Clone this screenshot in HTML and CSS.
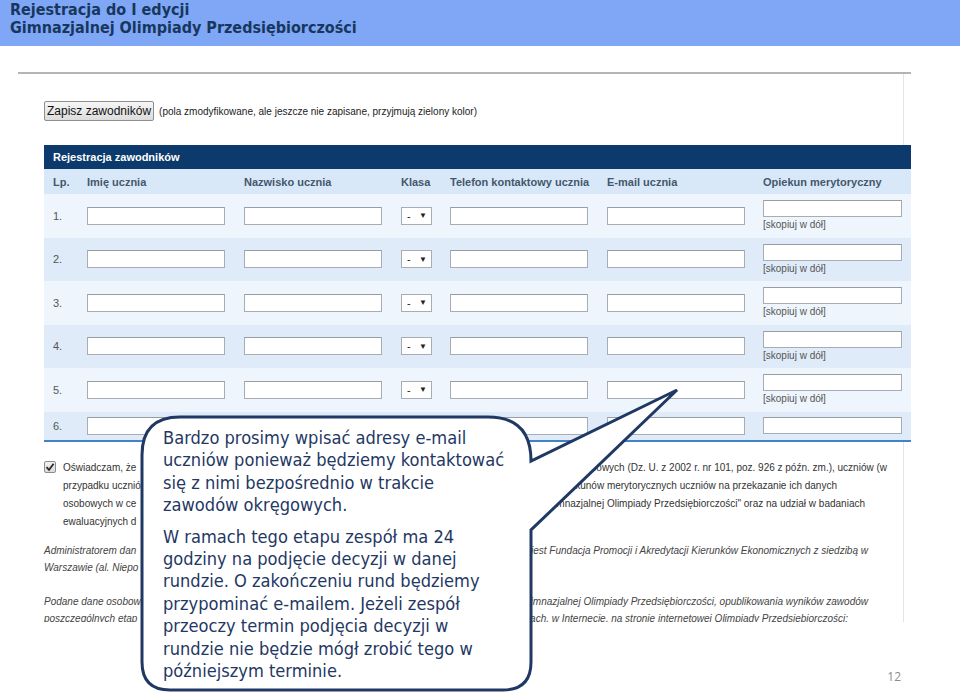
FILE: index.html
```html
<!DOCTYPE html>
<html lang="pl">
<head>
<meta charset="utf-8">
<title>Rejestracja do I edycji Gimnazjalnej Olimpiady Przedsiębiorczości</title>
<link rel="stylesheet" href="styles.css">
</head>
<body>
<header class="slide-header">
  <h1>Rejestracja do I edycji<br>Gimnazjalnej Olimpiady Przedsiębiorczości</h1>
</header>

<main class="shot">
  <div class="save-bar">
    <button class="save-btn" type="button">Zapisz zawodników</button>
    <span class="save-note">(pola zmodyfikowane, ale jeszcze nie zapisane, przyjmują zielony kolor)</span>
  </div>

  <section class="reg">
    <div class="reg-title">Rejestracja zawodników</div>
    <div class="row head">
      <div class="c-lp">Lp.</div>
      <div>Imię ucznia</div>
      <div>Nazwisko ucznia</div>
      <div>Klasa</div>
      <div>Telefon kontaktowy ucznia</div>
      <div>E-mail ucznia</div>
      <div>Opiekun merytoryczny</div>
    </div>

    <div class="row light">
      <div class="c-lp num">1.</div>
      <div><span class="fld"></span></div>
      <div><span class="fld"></span></div>
      <div><span class="sel"><span>-</span><span class="arr">▼</span></span></div>
      <div><span class="fld"></span></div>
      <div><span class="fld"></span></div>
      <div class="opk"><span class="fld wide"></span><span class="copy">[skopiuj w dół]</span></div>
    </div>
    <div class="row dark">
      <div class="c-lp num">2.</div>
      <div><span class="fld"></span></div>
      <div><span class="fld"></span></div>
      <div><span class="sel"><span>-</span><span class="arr">▼</span></span></div>
      <div><span class="fld"></span></div>
      <div><span class="fld"></span></div>
      <div class="opk"><span class="fld wide"></span><span class="copy">[skopiuj w dół]</span></div>
    </div>
    <div class="row light">
      <div class="c-lp num">3.</div>
      <div><span class="fld"></span></div>
      <div><span class="fld"></span></div>
      <div><span class="sel"><span>-</span><span class="arr">▼</span></span></div>
      <div><span class="fld"></span></div>
      <div><span class="fld"></span></div>
      <div class="opk"><span class="fld wide"></span><span class="copy">[skopiuj w dół]</span></div>
    </div>
    <div class="row dark">
      <div class="c-lp num">4.</div>
      <div><span class="fld"></span></div>
      <div><span class="fld"></span></div>
      <div><span class="sel"><span>-</span><span class="arr">▼</span></span></div>
      <div><span class="fld"></span></div>
      <div><span class="fld"></span></div>
      <div class="opk"><span class="fld wide"></span><span class="copy">[skopiuj w dół]</span></div>
    </div>
    <div class="row light">
      <div class="c-lp num">5.</div>
      <div><span class="fld"></span></div>
      <div><span class="fld"></span></div>
      <div><span class="sel"><span>-</span><span class="arr">▼</span></span></div>
      <div><span class="fld"></span></div>
      <div><span class="fld"></span></div>
      <div class="opk"><span class="fld wide"></span><span class="copy">[skopiuj w dół]</span></div>
    </div>
    <div class="row dark last">
      <div class="c-lp num">6.</div>
      <div><span class="fld"></span></div>
      <div><span class="fld"></span></div>
      <div><span class="sel"><span>-</span><span class="arr">▼</span></span></div>
      <div><span class="fld"></span></div>
      <div><span class="fld"></span></div>
      <div class="opk"><span class="fld wide"></span></div>
    </div>
  </section>

  <div class="decl">
    <span class="chk"><svg viewBox="0 0 12 12" width="12" height="12"><path d="M2.5 6.2 L5 8.8 L9.6 2.8" fill="none" stroke="#2b2b2b" stroke-width="1.8"/></svg></span>
    <div class="decl-text">
      <div class="ln ln-1"><span>Oświadczam, że</span><span>osobowych (Dz. U. z 2002 r. nr 101, poz. 926 z późn. zm.), uczniów (w</span></div>
      <div class="ln ln-2"><span>przypadku ucznió</span><span>opiekunów merytorycznych uczniów na przekazanie ich danych</span></div>
      <div class="ln ln-3"><span>osobowych w ce</span><span>„Gimnazjalnej Olimpiady Przedsiębiorczości" oraz na udział w badaniach</span></div>
      <div class="ln"><span>ewaluacyjnych d</span></div>
    </div>
  </div>

  <div class="legal">
    <div class="ln ln-a"><span>Administratorem dan</span><span>jest Fundacja Promocji i Akredytacji Kierunków Ekonomicznych z siedzibą w</span></div>
    <div class="ln"><span>Warszawie (al. Niepo</span></div>
    <div class="ln ln-c gap"><span>Podane dane osobow</span><span>Gimnazjalnej Olimpiady Przedsiębiorczości, opublikowania wyników zawodów</span></div>
    <div class="ln ln-d"><span>poszczególnych etap</span><span>mediach, w Internecie, na stronie internetowej Olimpiady Przedsiębiorczości:</span></div>
  </div>
</main>

<div class="page-num">12</div>

<aside class="callout">
  <svg class="bubble" viewBox="138 384 545 310" width="545" height="310">
    <path d="M180 417 L488 417 Q531 417 531 461 L677 390 L531 530 L531 662 Q531 690 503 690 L170 690 Q142 690 142 662 L142 455 Q142 417 180 417 Z" fill="#ffffff" stroke="#1f3864" stroke-width="3" stroke-linejoin="miter"/>
  </svg>
  <div class="bubble-text">
    <p>Bardzo prosimy wpisać adresy e-mail<br>uczniów ponieważ będziemy kontaktować<br>się z nimi bezpośrednio w trakcie<br>zawodów okręgowych.</p>
    <p>W ramach tego etapu zespół ma 24<br>godziny na podjęcie decyzji w danej<br>rundzie. O zakończeniu rund będziemy<br>przypominać e-mailem. Jeżeli zespół<br>przeoczy termin podjęcia decyzji w<br>rundzie nie będzie mógł zrobić tego w<br>późniejszym terminie.</p>
  </div>
</aside>
</body>
</html>
```

FILE: styles.css
```css
html, body {
  margin: 0;
  padding: 0;
}

body {
  width: 960px;
  height: 697px;
  overflow: hidden;
  position: relative;
  background: #ffffff;
  font-family: "Liberation Sans", Arial, sans-serif;
  color: #222;
}

/* slide title band */
.slide-header {
  height: 46px;
  box-sizing: border-box;
  padding: 1px 10px 0;
  background: #7fa7f6;
}

.slide-header h1 {
  margin: 0;
  font-family: "DejaVu Sans Condensed", "DejaVu Sans", sans-serif;
  font-weight: bold;
  font-size: 16px;
  line-height: 17.5px;
  color: #17375e;
}

/* the screenshot of the form */
.shot {
  margin: 26px 0 0 18px;
  width: 893px;
  height: 550px;
  box-sizing: border-box;
  padding-left: 26px;
  border-top: 2px solid #b4b4b4;
  overflow: hidden;
  background: linear-gradient(#e4e4e4, #e4e4e4) no-repeat 885px 0 / 1px 100%;
}

.save-bar {
  margin-top: 27px;
  display: flex;
  align-items: center;
  gap: 5px;
}

.save-btn {
  height: 20px;
  box-sizing: border-box;
  padding: 0 2px;
  margin: 0;
  border: 1px solid #8e8e8e;
  border-radius: 2px;
  background: linear-gradient(#f6f6f6, #dcdcdc);
  font-family: "Liberation Sans", Arial, sans-serif;
  font-size: 12px;
  line-height: 17px;
  color: #111;
}

.save-note {
  font-size: 10px;
  color: #222;
}

/* registration table */
.reg {
  margin-top: 24px;
  width: 867px;
}

.reg-title {
  height: 24px;
  line-height: 24px;
  padding-left: 9px;
  background: #0c3a6d;
  color: #ffffff;
  font-size: 11px;
  font-weight: bold;
}

.row {
  display: grid;
  grid-template-columns: 43px 157px 157px 49px 157px 156px 148px;
  align-items: center;
  font-size: 11px;
}

.row.head {
  height: 25px;
  background: #d9e8f8;
  color: #44586c;
  font-weight: bold;
}

.row.light {
  height: 43.5px;
  background: #eef5fc;
}

.row.dark {
  height: 43.5px;
  background: #dfebf8;
}

.row.last {
  height: 28px;
  border-bottom: 2px solid #4282c6;
}

.c-lp {
  padding-left: 9px;
}

.num {
  color: #555;
}

.fld {
  display: block;
  width: 138px;
  height: 18px;
  box-sizing: border-box;
  border: 1px solid #a7adb3;
  border-top-color: #979da3;
  background: #ffffff;
}

.fld.wide {
  width: 139px;
  height: 17px;
}

.sel {
  display: flex;
  justify-content: space-between;
  align-items: center;
  width: 31px;
  height: 18px;
  box-sizing: border-box;
  padding: 0 4px 0 5px;
  border: 1px solid #a7adb3;
  background: #ffffff;
  font-size: 11px;
  color: #222;
}

.sel .arr {
  font-size: 8px;
}

.opk {
  display: flex;
  flex-direction: column;
  align-items: flex-start;
}

.copy {
  margin-top: 2px;
  font-size: 10px;
  line-height: 12px;
  color: #555;
}

/* declaration */
.decl {
  margin-top: 17px;
  display: flex;
  align-items: flex-start;
  gap: 7px;
}

.chk {
  display: block;
  width: 12px;
  height: 12px;
  box-sizing: border-box;
  margin-top: 2px;
  border: 1px solid #8d8d8d;
  border-radius: 2px;
  background: linear-gradient(#f2f2f2, #dadada);
}

.chk svg {
  display: block;
  margin: -1px 0 0 -1px;
}

.decl-text {
  font-size: 10px;
  line-height: 18px;
  color: #333;
}

.ln {
  display: flex;
  justify-content: space-between;
  white-space: nowrap;
}

.ln-1 { width: 824px; }
.ln-2 { width: 774px; }
.ln-3 { width: 802px; }

.legal {
  margin-top: 11px;
  font-size: 10px;
  line-height: 17px;
  font-style: italic;
  color: #444;
}

.legal .gap {
  margin-top: 17px;
}

.ln-a { width: 824px; }
.ln-c { width: 824px; }
.ln-d { width: 804px; }

/* slide number */
.page-num {
  margin-top: 47px;
  padding-right: 59px;
  text-align: right;
  font-family: "Open Sans", "Liberation Sans", sans-serif;
  font-size: 12px;
  line-height: 16px;
  color: #8c8c8c;
}

/* speech bubble overlay */
.callout {
  position: absolute;
  left: 138px;
  top: 384px;
  width: 545px;
  height: 310px;
}

.bubble {
  display: block;
}

.bubble-text {
  position: absolute;
  left: 25px;
  top: 43px;
  width: 365px;
  white-space: nowrap;
  font-family: "DejaVu Sans Condensed", "DejaVu Sans", sans-serif;
  font-size: 18.1px;
  line-height: 22.4px;
  color: #1f3864;
}

.bubble-text p {
  margin: 0;
}

.bubble-text p + p {
  margin-top: 9px;
}
```
